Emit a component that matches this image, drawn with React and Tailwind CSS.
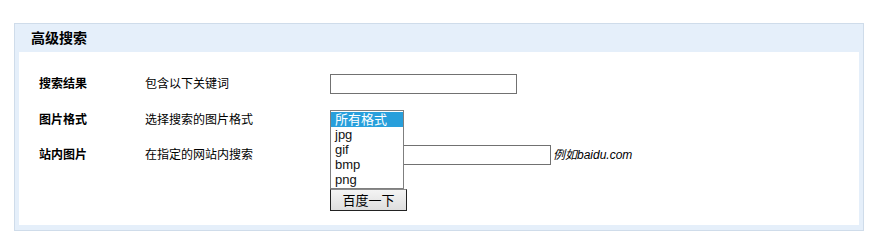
export default function App() {
  const formats = ['所有格式', 'jpg', 'gif', 'bmp', 'png'];

  return (
    <div className="w-[879px] h-[247px] bg-white pt-[23px] pl-[14px]" style={{ fontFamily: '"Liberation Sans", "Noto Sans CJK SC", sans-serif' }}>
      {/* advanced search panel */}
      <div className="w-[850px] border border-[#cfdcea] bg-[#e5effa] px-[4px] pb-[5px]">
        <div className="h-[28px] flex items-center pl-[12px] text-[14px] font-bold text-black">高级搜索</div>

        <div className="bg-white pt-[14px] pb-[14px] text-[12px] text-black">
          <div className="h-[36px] flex items-center">
            <span className="w-[126px] pl-[20px] font-bold">搜索结果</span>
            <span className="w-[185px]">包含以下关键词</span>
            <input type="text" className="w-[187px] h-[20px] border border-[#717171] outline-none" />
          </div>

          <div className="h-[35px] flex items-center relative">
            <span className="w-[126px] pl-[20px] font-bold">图片格式</span>
            <span className="w-[185px]">选择搜索的图片格式</span>
            {/* open dropdown list */}
            <div className="absolute left-[311px] top-[8px] z-10 w-[74px] h-[79px] border border-[#7f7f7f] bg-white py-[1px] text-[13px]">
              {formats.map((f, i) => (
                <div
                  key={f}
                  className={`h-[15px] leading-[15px] pl-[4px] ${i === 0 ? 'bg-[#289fdb] text-white' : 'text-[#111]'}`}
                >
                  {f}
                </div>
              ))}
            </div>
          </div>

          <div className="h-[36px] flex items-center">
            <span className="w-[126px] pl-[20px] font-bold">站内图片</span>
            <span className="w-[185px]">在指定的网站内搜索</span>
            <input type="text" className="w-[221px] h-[20px] border border-[#717171] outline-none" />
            <span className="ml-[2px] italic">例如baidu.com</span>
          </div>

          <div className="mt-[16px] pl-[311px] flex">
            <button className="w-[77px] h-[22px] border border-[#222] border-t-[#8a8a8a] bg-gradient-to-b from-[#f4f4f4] to-[#dedede] text-[13px] text-black leading-none">
              百度一下
            </button>
          </div>
        </div>
      </div>
    </div>
  );
}
